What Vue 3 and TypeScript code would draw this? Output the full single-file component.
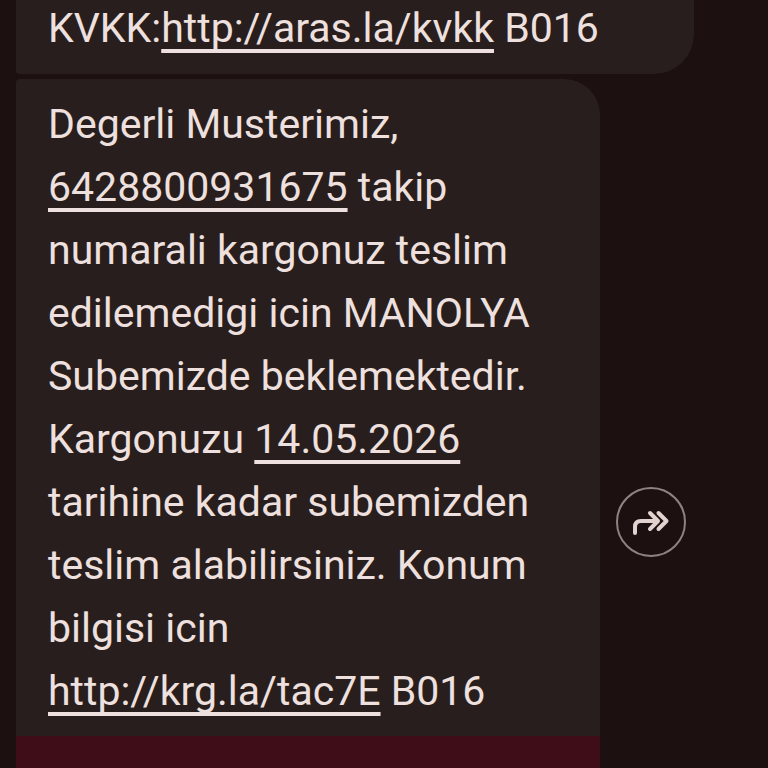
<script setup lang="ts">
interface Part {
  text: string
  href?: string
}

const previous: Part[] = [
  { text: 'KVKK:' },
  { text: 'http://aras.la/kvkk', href: 'http://aras.la/kvkk' },
  { text: ' B016' },
]

const lines: Part[][] = [
  [{ text: 'Degerli Musterimiz,' }],
  [{ text: '6428800931675', href: 'tel:6428800931675' }, { text: ' takip' }],
  [{ text: 'numarali kargonuz teslim' }],
  [{ text: 'edilemedigi icin MANOLYA' }],
  [{ text: 'Subemizde beklemektedir.' }],
  [{ text: 'Kargonuzu ' }, { text: '14.05.2026', href: '#14.05.2026' }],
  [{ text: 'tarihine kadar subemizden' }],
  [{ text: 'teslim alabilirsiniz. Konum' }],
  [{ text: 'bilgisi icin' }],
  [{ text: 'http://krg.la/tac7E', href: 'http://krg.la/tac7E' }, { text: ' B016' }],
]
</script>

<template>
  <main class="thread">
    <article class="bubble bubble-previous">
      <p class="line">
        <template v-for="(part, i) in previous" :key="i"><a v-if="part.href" :href="part.href">{{ part.text }}</a><span v-else>{{ part.text }}</span></template>
      </p>
    </article>
    <div class="message">
      <article class="bubble bubble-current">
        <div class="body">
          <p v-for="(line, n) in lines" :key="n" class="line">
            <template v-for="(part, i) in line" :key="i"><a v-if="part.href" :href="part.href">{{ part.text }}</a><span v-else>{{ part.text }}</span></template>
          </p>
        </div>
        <div class="preview"></div>
      </article>
      <button class="forward" type="button" aria-label="Forward">
        <svg viewBox="0 0 66 66" fill="none" stroke="currentColor" stroke-width="4" stroke-linecap="round" stroke-linejoin="round" aria-hidden="true">
          <path d="M17 44V38Q17 32 23 32H39" />
          <path d="M32 24L40 32L32 40" />
          <path d="M40.5 24L48.5 32L40.5 40" />
        </svg>
      </button>
    </div>
  </main>
</template>

<style>
body {
  background: #1c1110;
}
</style>

<style scoped>
.thread {
  box-sizing: border-box;
  height: 100vh;
  overflow: hidden;
  padding-left: 16px;
  background: #1c1110;
  color: #eee0de;
  font-family: Roboto, "Liberation Sans", sans-serif;
  font-size: 41px;
  line-height: 63px;
}

.bubble {
  background: #281e1d;
  overflow: hidden;
}

.bubble-previous {
  margin-right: 74px;
  padding: 0 32px 14px;
  border-radius: 0 0 40px 4px;
}

.bubble-previous .line {
  margin-top: -3px;
}

.message {
  display: flex;
  align-items: center;
  gap: 16px;
  margin-top: 5px;
  padding-right: 82px;
}

.bubble-current {
  flex: 1;
  min-width: 0;
  border-radius: 4px 36px 0 0;
}

.body {
  padding: 14px 32px 13px;
}

.line {
  margin: 0;
  white-space: pre;
}

a {
  color: inherit;
  text-decoration: underline;
  text-decoration-thickness: 4px;
  text-decoration-skip-ink: none;
  text-underline-offset: 7px;
}

.preview {
  height: 229px;
  background: #3e0d18;
}

.forward {
  flex: none;
  box-sizing: border-box;
  width: 70px;
  height: 70px;
  padding: 0;
  border: 2px solid #8f8281;
  border-radius: 50%;
  background: transparent;
  color: #e2d3d1;
}

.forward svg {
  display: block;
  width: 100%;
  height: 100%;
}
</style>
